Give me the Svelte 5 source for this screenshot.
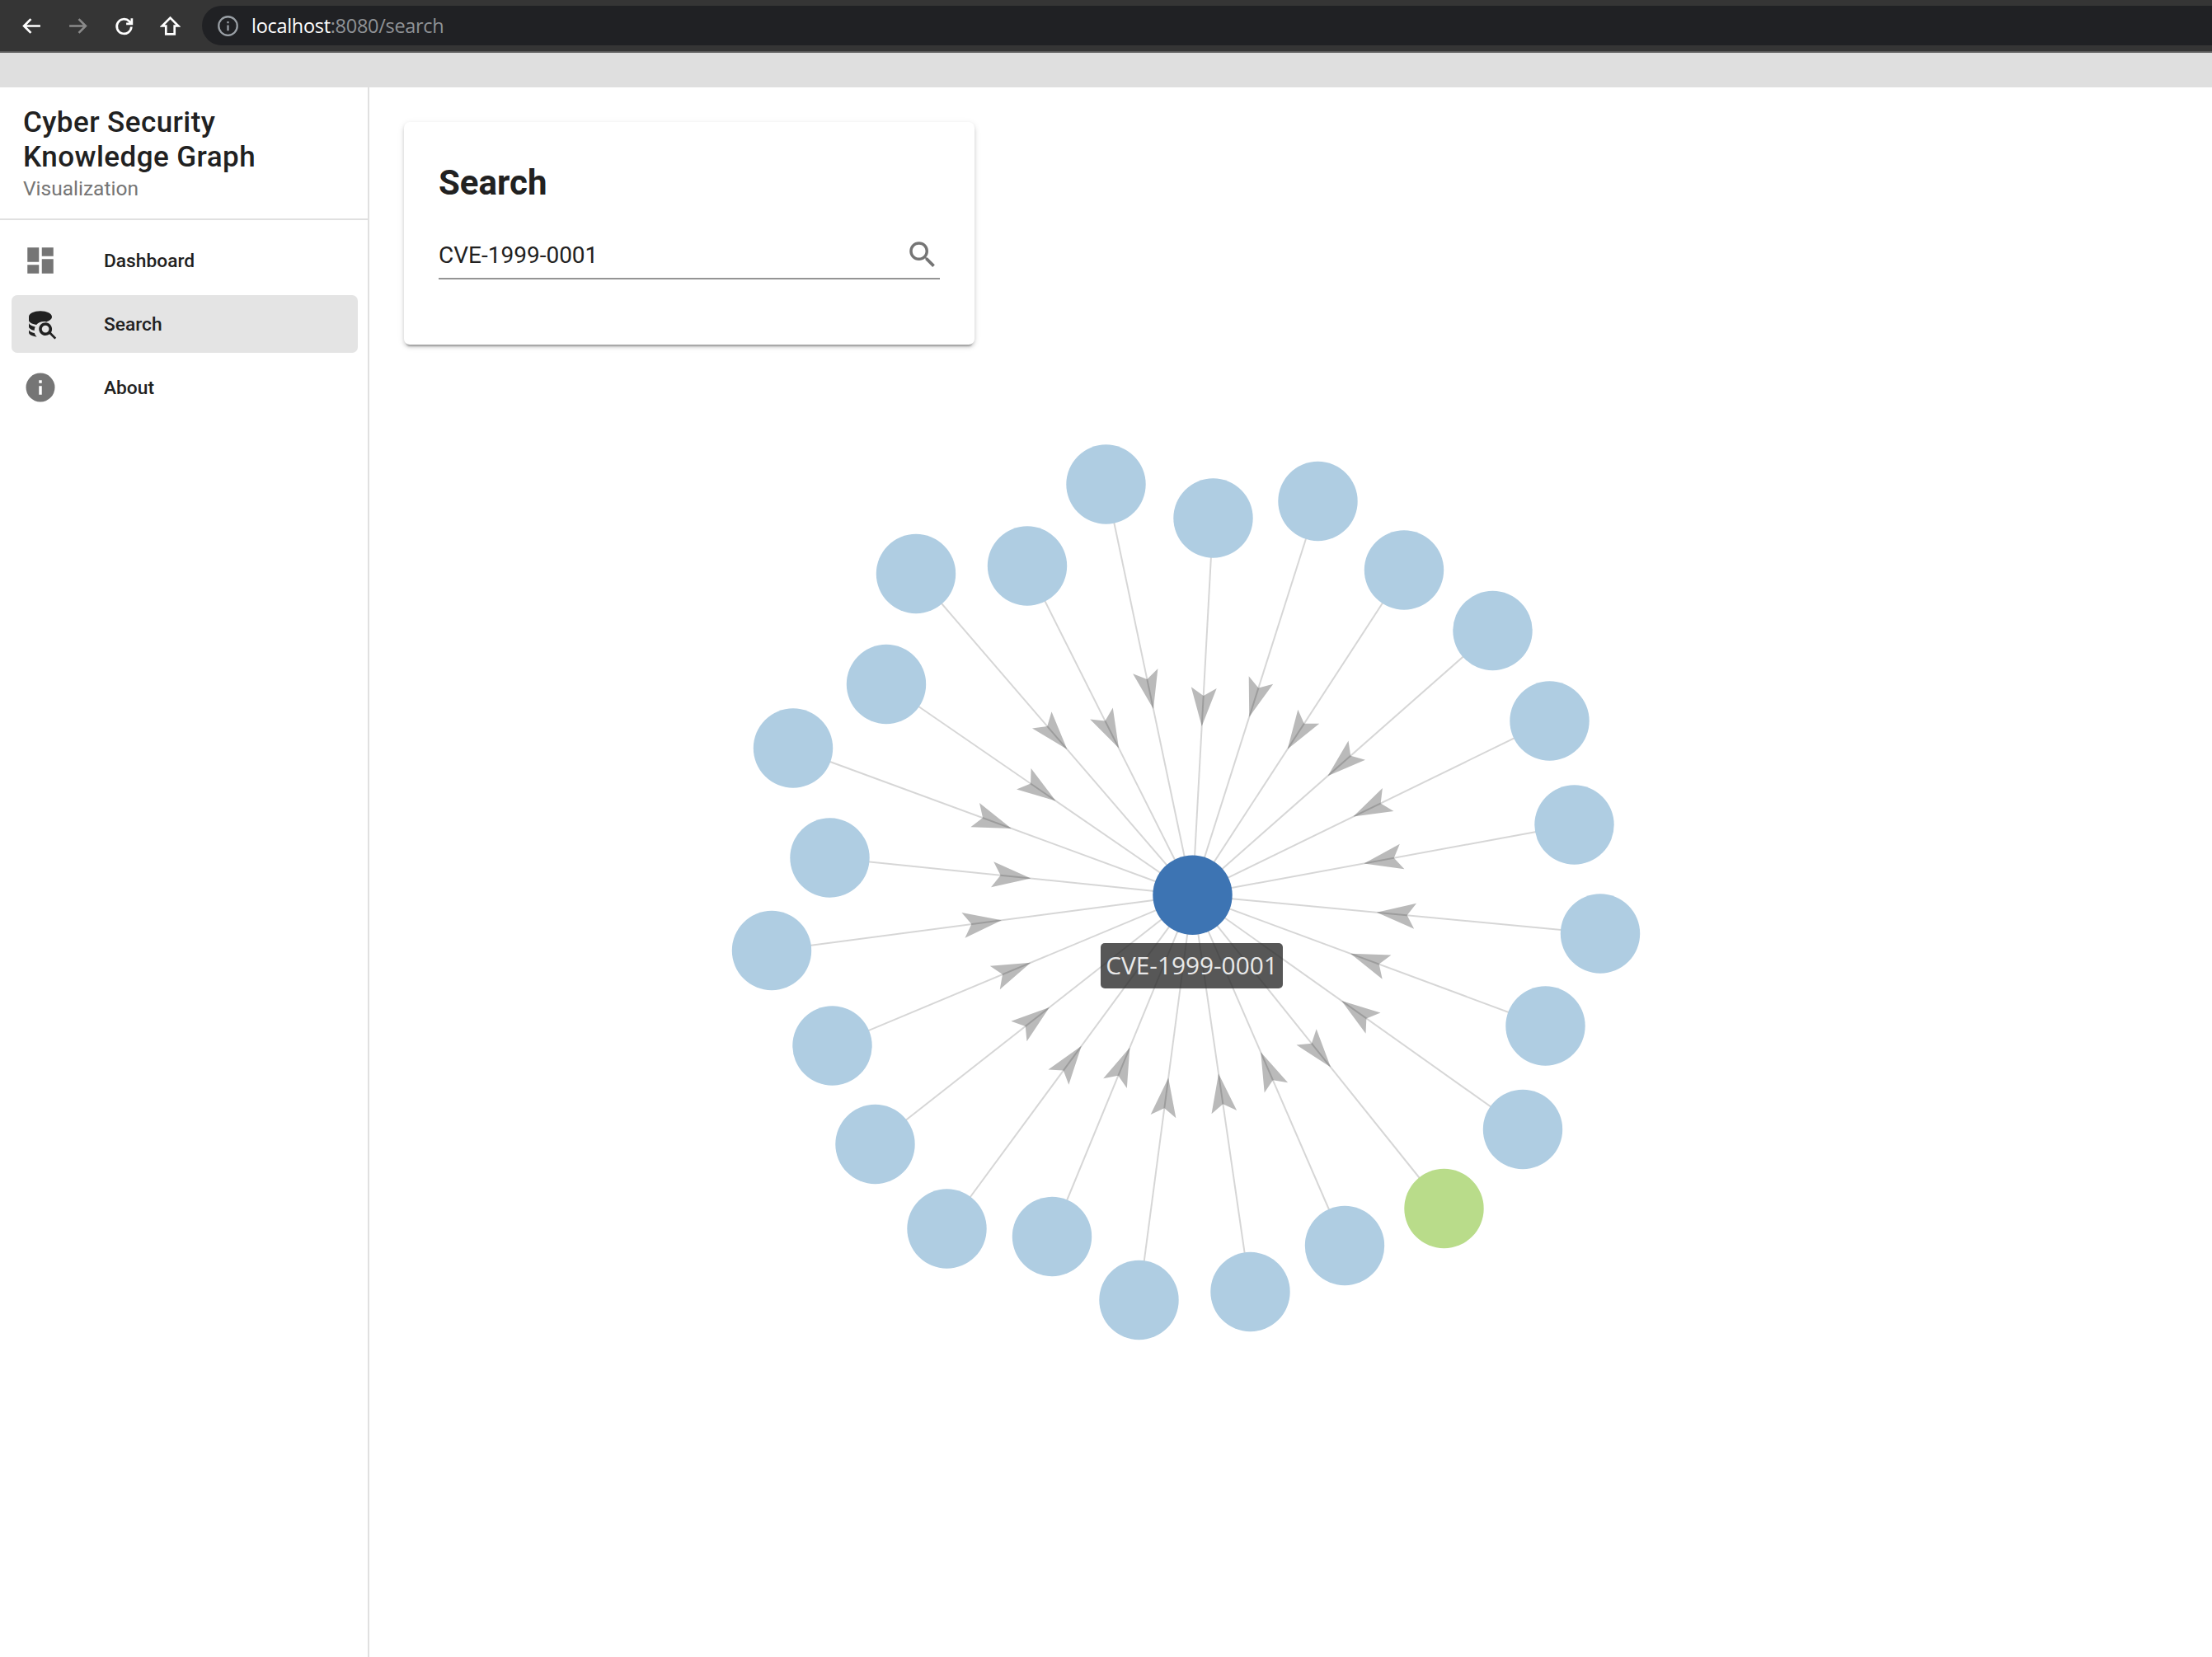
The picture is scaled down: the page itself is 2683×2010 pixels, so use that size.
<script lang="ts">
  const center = { x: 1446.5, y: 1085.7 };
  const radius = 48.2;

  // page coordinates, clockwise from the top
  const leaves = [
    [1341.5, 587.5], [1471.5, 628.5], [1598.5, 608], [1703, 691.5], [1810.5, 765], [1879.5, 874.5],
    [1909.5, 1000.5], [1941, 1132.5], [1874.5, 1244.5], [1847, 1370], [1751.5, 1466, 'cwe'], [1631, 1511],
    [1516.5, 1567], [1381.5, 1577], [1276, 1500], [1148.5, 1490.5], [1061.5, 1388], [1009.5, 1268.5],
    [936, 1153], [1006.5, 1040.5], [962, 907.5], [1075, 830], [1111, 696], [1246, 686.5]
  ];

  const nodes = leaves.map(([x, y, kind]) => {
    const dx = center.x - (x as number);
    const dy = center.y - (y as number);
    const len = Math.hypot(dx, dy);
    // the cwe edge runs the other way, out of the root
    const dir = kind === 'cwe' ? -1 : 1;
    const ux = (dir * dx) / len;
    const uy = (dir * dy) / len;
    const mx = (center.x + (x as number)) / 2;
    const my = (center.y + (y as number)) / 2;
    const at = (along: number, side: number) =>
      `${mx + ux * along - uy * side},${my + uy * along + ux * side}`;
    return {
      x, y, kind,
      arrow: [at(24, 0), at(-23, 15.5), at(-13, 0), at(-23, -15.5)].join(' ')
    };
  });

  const menu = [
    { label: 'Dashboard', icon: 'dashboard' },
    { label: 'Search', icon: 'search', active: true },
    { label: 'About', icon: 'about' }
  ];
</script>

<div class="page">
  <header class="chrome">
    <svg class="nav-icon" viewBox="0 0 24 24"><path d="M22 12H3M11 4l-8 8 8 8" /></svg>
    <svg class="nav-icon dim" viewBox="0 0 24 24"><path d="M2 12h19M13 4l8 8-8 8" /></svg>
    <svg class="nav-icon" viewBox="0 0 24 24"><path d="M20.500 13a8.500 8.500 0 1 1-2.500-6.500L21 9.500M21 3v6.500h-6.500" /></svg>
    <svg class="nav-icon" viewBox="0 0 24 24"><path d="M12 2.500L2.500 12H7v9.500h10V12h4.500Z" /></svg>
    <div class="omnibox">
      <svg class="site-icon" viewBox="0 0 24 24"><circle cx="12" cy="12" r="10" /><path d="M12 11v6M12 7v2" /></svg>
      <span class="host">localhost</span><span class="rest">:8080/search</span>
    </div>
  </header>
  <div class="appbar"></div>

  <div class="body">
    <aside class="drawer">
      <div class="brand">
        <div class="brand-title">Cyber Security Knowledge Graph</div>
        <div class="brand-sub">Visualization</div>
      </div>
      <nav class="menu">
        {#each menu as item}
          <div class="menu-item" class:active={item.active}>
            <svg class="menu-icon" viewBox="0 0 24 24">
              {#if item.icon === 'dashboard'}
                <path d="M13,3V9H21V3M13,21H21V11H13M3,21H11V15H3M3,13H11V3H3V13Z" />
              {:else if item.icon === 'search'}
                <path class="dark" d="M4 7C4 4.800 7.600 3 12 3s8 1.800 8 4c0 1.500-1.500 2.800-3.800 3.500-2.700-.6-5.300.1-7 2C6 12 4 10.700 4 9.500Z" />
                <path class="dark" d="M4 11c0 1.300 1.800 2.400 4.400 3-.4.800-.6 1.700-.6 2.500C5.400 16 4 14.900 4 13.800Z" />
                <path class="dark" d="M4 15.800c0 1.100 1.600 2 3.900 2.500.3 1 .8 1.800 1.600 2.600C6.500 20.500 4 19.300 4 18Z" />
                <path class="dark" d="M18.680,12.320C16.920,10.560 14.070,10.560 12.320,12.320C10.560,14.080 10.560,16.930 12.320,18.680C13.950,20.310 16.530,20.430 18.310,19.040L21.900,22.600L23,21.500L19.400,17.900C20.430,16.530 20.320,13.950 18.680,12.320M17.270,17.270C16.290,18.250 14.710,18.250 13.730,17.270C12.750,16.290 12.750,14.710 13.730,13.730C14.710,12.750 16.290,12.750 17.270,13.730C18.250,14.710 18.250,16.290 17.270,17.270Z" />
              {:else}
                <path d="M13,9H11V7H13M13,17H11V11H13M12,2A10,10 0 0,0 2,12A10,10 0 0,0 12,22A10,10 0 0,0 22,12A10,10 0 0,0 12,2Z" />
              {/if}
            </svg>
            <span class="menu-label">{item.label}</span>
          </div>
        {/each}
      </nav>
    </aside>

    <main class="content">
      <section class="card">
        <h2>Search</h2>
        <div class="field">
          <span class="field-value">CVE-1999-0001</span>
          <svg class="field-icon" viewBox="0 0 24 24">
            <path d="M9.500,3A6.500,6.500 0 0,1 16,9.500C16,11.110 15.410,12.590 14.440,13.730L14.710,14H15.500L20.500,19L19,20.500L14,15.500V14.710L13.730,14.440C12.590,15.410 11.110,16 9.500,16A6.500,6.500 0 0,1 3,9.500A6.500,6.500 0 0,1 9.500,3M9.500,5C7,5 5,7 5,9.500C5,12 7,14 9.500,14C12,14 14,12 14,9.500C14,7 12,5 9.500,5Z" />
          </svg>
        </div>
      </section>

      <div class="graph">
        <svg class="graph-svg" viewBox="448 460 2235 1550">
          {#each nodes as n}
            <line class="edge" x1={n.x} y1={n.y} x2={center.x} y2={center.y} />
            <polygon class="head" points={n.arrow} />
          {/each}
          {#each nodes as n}
            <circle class="leaf" class:cwe={n.kind === 'cwe'} cx={n.x} cy={n.y} r={radius} />
          {/each}
          <circle class="root" cx={center.x} cy={center.y} r={radius} />
        </svg>
        <div class="tip">CVE-1999-0001</div>
      </div>
    </main>
  </div>
</div>

<style>
  :global(body) {
    margin: 0;
    background: #fff;
  }

  .page {
    display: flex;
    flex-direction: column;
    height: 2010px;
    overflow: hidden;
    font-family: Roboto, sans-serif;
    color: #212121;
  }

  .chrome {
    display: flex;
    align-items: center;
    height: 64px;
    box-sizing: border-box;
    padding: 7px 0 7px 26px;
    gap: 31px;
    background: #353535;
    border-bottom: 2px solid #5a5a5a;
  }

  .nav-icon {
    width: 25px;
    height: 25px;
    fill: none;
    stroke: #fff;
    stroke-width: 2.6;
    flex: none;
  }

  .nav-icon.dim {
    stroke: #8a8a8a;
  }

  .omnibox {
    flex: 1;
    align-self: stretch;
    display: flex;
    align-items: center;
    margin-left: -5px;
    padding-left: 18px;
    background: #202124;
    border-radius: 25px 0 0 25px;
    font-family: 'Open Sans', sans-serif;
    font-size: 23.500px;
    letter-spacing: -0.3px;
  }

  .site-icon {
    width: 27px;
    height: 27px;
    margin-right: 15px;
    fill: none;
    stroke: #9aa0a6;
    stroke-width: 2;
  }

  .host {
    color: #fff;
  }

  .rest {
    color: #8f9296;
  }

  .appbar {
    height: 42px;
    background: #dfdfdf;
    flex: none;
  }

  .body {
    flex: 1;
    display: flex;
    min-height: 0;
  }

  .drawer {
    width: 448px;
    flex: none;
    box-sizing: border-box;
    border-right: 2px solid #e0e0e0;
  }

  .brand {
    height: 161px;
    box-sizing: border-box;
    padding: 22px 28px 0;
    border-bottom: 2px solid #e0e0e0;
  }

  .brand-title {
    font-size: 35px;
    font-weight: 500;
    line-height: 42px;
    letter-spacing: 0.44px;
    color: #212121;
  }

  .brand-sub {
    font-size: 24.500px;
    line-height: 34px;
    color: #757575;
  }

  .menu {
    display: flex;
    flex-direction: column;
    gap: 7px;
    padding: 14px 12px 14px 14px;
  }

  .menu-item {
    display: flex;
    align-items: center;
    height: 70px;
    padding: 0 14px;
    border-radius: 7px;
  }

  .menu-item.active {
    background: #e4e4e4;
  }

  .menu-icon {
    width: 42px;
    height: 42px;
    margin-right: 56px;
    fill: #757575;
    flex: none;
  }

  .menu-icon .dark {
    fill: #212121;
  }

  .menu-label {
    font-size: 22.750px;
    font-weight: 500;
  }

  .content {
    flex: 1;
    min-width: 0;
  }

  .card {
    width: 692px;
    height: 270px;
    box-sizing: border-box;
    margin: 42px 0 42px 42px;
    padding: 44px 42px 0;
    border-radius: 7px;
    background: #fff;
    box-shadow: 0 5px 2px -3px rgba(0, 0, 0, 0.25), 0 3px 4px 0 rgba(0, 0, 0, 0.14), 0 2px 9px 0 rgba(0, 0, 0, 0.1);
  }

  h2 {
    margin: 0;
    font-size: 42px;
    font-weight: 700;
    line-height: 60px;
    color: #212121;
  }

  .field {
    display: flex;
    align-items: center;
    justify-content: space-between;
    height: 58px;
    margin-top: 29px;
    box-sizing: border-box;
    padding-bottom: 0;
    border-bottom: 2px solid #949494;
  }

  .field-value {
    font-size: 28px;
    color: #212121;
  }

  .field-icon {
    width: 42px;
    height: 42px;
    fill: #757575;
  }

  .graph {
    position: relative;
  }

  .graph-svg {
    display: block;
    width: 2235px;
    height: 1550px;
  }

  .edge {
    stroke: #000;
    stroke-opacity: 0.16;
    stroke-width: 2;
  }

  .head {
    fill: #000;
    fill-opacity: 0.27;
  }

  .leaf {
    fill: #afcde2;
  }

  .leaf.cwe {
    fill: #b9dc8a;
  }

  .root {
    fill: #3d74b3;
  }

  .tip {
    position: absolute;
    left: 887px;
    top: 684px;
    width: 221px;
    height: 55px;
    padding-bottom: 2px;
    box-sizing: border-box;
    display: flex;
    align-items: center;
    justify-content: center;
    border-radius: 5px;
    background: rgba(40, 40, 40, 0.78);
    color: #e9e9e9;
    font-family: 'Open Sans', sans-serif;
    font-size: 29.800px;
  }
</style>
